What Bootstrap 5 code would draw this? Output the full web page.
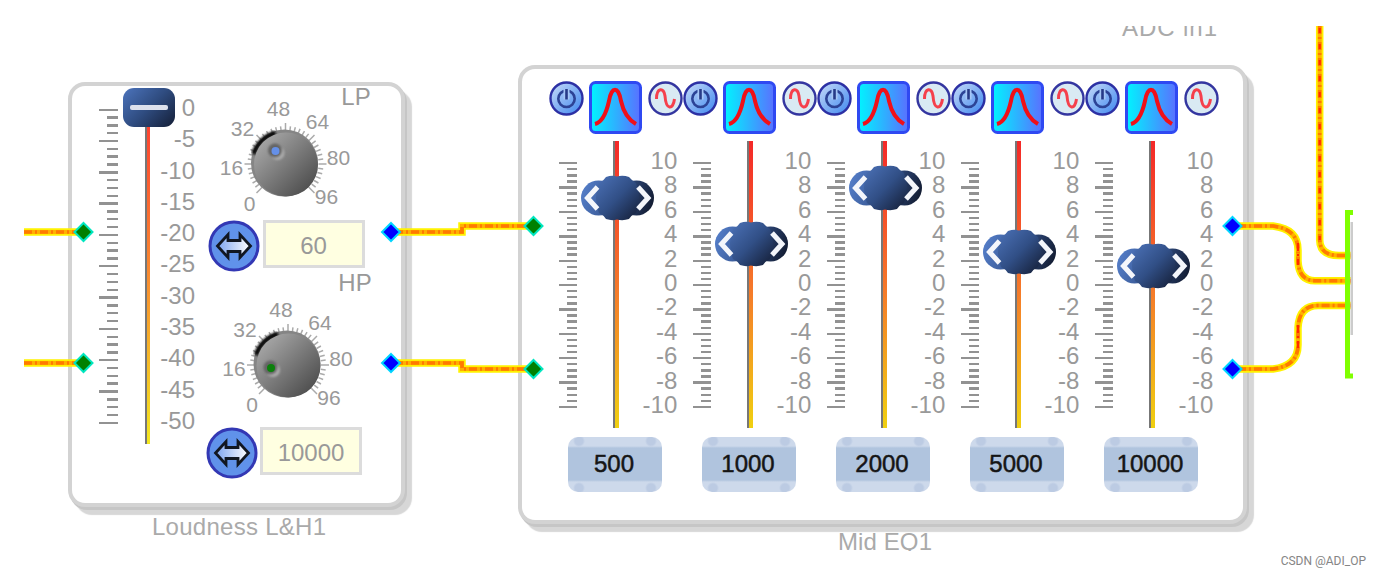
<!DOCTYPE html>
<html lang="en">
<head>
<meta charset="utf-8">
<meta name="viewport" content="width=device-width, initial-scale=1">
<title>Signal flow: Loudness and Mid EQ</title>
<link href="https://cdn.jsdelivr.net/npm/bootstrap@5.3.0/dist/css/bootstrap.min.css" rel="stylesheet">
<style>
  body { font-family: "Liberation Sans", Arial, sans-serif; background: #fff; height: 576px; overflow: hidden; }
  .schematic { width: 1329px; height: 525px; margin: 26px 0 0 24px; font-size: 24px; line-height: 24px; color: #999; }
  .wires { left: 0; top: 0; z-index: 3; pointer-events: none; }
  .block { background: #fff; border: 4px solid #d3d3d3; border-radius: 17px; box-shadow: 2px 3px 0 #c6c6c6, 7px 8px 1px #d7d7d7; }
  .block-loudness { left: 44px; top: 56px; width: 337px; height: 425px; padding: 2px 0 0 27px; }
  .block-eq { left: 494px; top: 39px; width: 729px; height: 459px; padding: 12px 0 0 26.5px; }

  .ruler { width: 18.5px; }
  .ruler i { height: 2.4px; width: 10.5px; background: #929292; filter: blur(.4px); }
  .ruler i.major { width: 18.5px; }
  .track { width: 5.5px; border-left: 2.5px solid #777; }
  .loud-ruler { height: 316px; margin-top: 20.5px; }
  .loud-slide { width: 52px; margin-left: 5px; height: 356px; }
  .loud-slide .track { margin-left: 22px; height: 356px; background: linear-gradient(#ff3030, #f98a30 52%, #f4e820); }
  .loud-thumb { left: 0; top: 0; width: 52px; height: 39px; border-radius: 11px; background: linear-gradient(135deg, #4c74bd, #2f4c80 50%, #141e36); }
  .loud-thumb span { width: 38px; height: 5px; border-radius: 2px; background: #dde1ec; }
  .loud-scale { width: 40px; height: 337px; margin: 8px 0 0 -19.5px; z-index: 1; }
  .filters { width: 166px; margin-left: 7px; }
  .filters svg { display: block; }
  .filter-two { margin-top: 4px; }
  .entry { width: 102px; height: 48px; background: #ffffe1; border: 3px solid #dcdcdc; line-height: 46px; }
  .entry-row { gap: 2.5px; }
  .filter-one .entry-row { padding-left: 6px; }
  .filter-two .entry-row { padding-left: 3.5px; }

  .channel { width: 134px; }
  .eq-ruler { height: 246.4px; margin: 21px 0 0 10.3px; }
  .eq-slide { width: 73px; margin-left: 3.5px; height: 287px; }
  .eq-slide .track { margin-left: 32.5px; height: 287px; background: linear-gradient(#f42828, #f57a2a 52%, #f0d010); }
  .eq-thumb { left: 0; }
  .eq-scale { width: 38px; height: 268px; margin: 8px 0 0 -14.5px; }
  .chip { width: 94px; height: 55px; margin: 9px 0 0 19.5px; border-radius: 10px; color: #151515; line-height: 54px;
    padding-right: 2px; -webkit-text-stroke: .5px #151515;
    background:
      radial-gradient(circle at 11px 4px, #bccbe3 0 4px, transparent 6px),
      radial-gradient(circle at 83px 4px, #bccbe3 0 4px, transparent 6px),
      radial-gradient(circle at 11px 51px, #bccbe3 0 4px, transparent 6px),
      radial-gradient(circle at 83px 51px, #bccbe3 0 4px, transparent 6px),
      linear-gradient(#cdd9eb 0 9px, #b0c4de 11px 43px, #cdd9eb 45px); }
  .credit { font: 12px/20px Roboto, sans-serif; color: #858585; padding-right: 15px; }
</style>
</head>
<body>
<svg width="0" height="0" class="position-absolute" aria-hidden="true">
  <defs>
    <linearGradient id="knobFill" x1="0" y1="0" x2="1" y2="1"><stop offset=".1" stop-color="#a8a8a8"/><stop offset=".9" stop-color="#4c4c4c"/></linearGradient>
    <linearGradient id="navy" x1="0" y1="0" x2="1" y2="1"><stop stop-color="#4c72b8"/><stop offset=".5" stop-color="#314f86"/><stop offset="1" stop-color="#131c33"/></linearGradient>
    <linearGradient id="navyWide" gradientUnits="userSpaceOnUse" x1="0" y1="10" x2="73" y2="36"><stop stop-color="#5680cc"/><stop offset=".5" stop-color="#34528b"/><stop offset="1" stop-color="#10182b"/></linearGradient>
    <linearGradient id="arrowFill"><stop stop-color="#7ea5f0"/><stop offset="1" stop-color="#fff"/></linearGradient>
    <linearGradient id="powerFill" x1="0" y1="0" x2="1" y2="1"><stop stop-color="#c9dcf8"/><stop offset="1" stop-color="#3d87f0"/></linearGradient>
    <linearGradient id="peakFill"><stop stop-color="#00f4ff"/><stop offset="1" stop-color="#5a70ff"/></linearGradient>
    <filter id="soften"><feGaussianBlur stdDeviation=".8"/></filter>
    <symbol id="swap" viewBox="0 0 52 52">
      <circle cx="26" cy="26" r="24" fill="#6092ea" stroke="#3338b4" stroke-width="3"/>
      <path d="M9.500 26 20 14.500 V20.500 H32 V14.500 L42.500 26 32 37.500 V31.500 H20 V37.500 Z" fill="url(#arrowFill)" stroke="#111722" stroke-width="2.800"/>
    </symbol>
    <symbol id="power" viewBox="0 0 35 35">
      <circle cx="17.500" cy="17.500" r="16" fill="url(#powerFill)" stroke="#2c30a4" stroke-width="2.400"/>
      <circle cx="17.500" cy="17.800" r="8.200" fill="none" stroke="#2c4396" stroke-width="2.600"/>
      <path d="M17.500 8 V18.500" stroke="#a6c6f6" stroke-width="6"/><path d="M17.500 8 V18.500" stroke="#273a88" stroke-width="2.600"/>
    </symbol>
    <symbol id="sine" viewBox="0 0 35 35">
      <circle cx="17.500" cy="17.500" r="16" fill="#d9eaf3" stroke="#3436a0" stroke-width="2.400"/>
      <path d="M8.500 18 C8.500 6.500 16 6 17 15 C18 29 25 29.500 26.500 18" fill="none" stroke="#f5404c" stroke-width="3"/>
    </symbol>
    <symbol id="peak" viewBox="0 0 53 53">
      <rect x="1.500" y="1.500" width="50" height="50" rx="5" fill="url(#peakFill)" stroke="#2f49f2" stroke-width="3"/>
      <path d="M6 43 C14 41 18 29 20 20 C22.500 5 29.500 5 32 20 C34 29 38 38 47 43" fill="none" stroke="#f01018" stroke-width="4"/>
    </symbol>
    <symbol id="thumb" viewBox="0 0 73 46">
      <g fill="url(#navyWide)"><circle cx="17.500" cy="23" r="17.500"/><circle cx="55.500" cy="23" r="17.500"/></g>
      <path d="M25 2 Q31 0 36 1.500 Q42 0 48 2 Q51 5.500 55 8 Q61 23 55 38 Q50 40.500 48 44 Q42 46 36 44.500 Q31 46 25 44 Q23 40.500 18 38 Q12 23 18 8 Q23 5.500 25 2Z" fill="url(#navy)"/>
      <path d="M16.500 12 L6.500 23 16.500 34 M57 12 L67 23 57 34" fill="none" stroke="#f4f6fb" stroke-width="5"/>
    </symbol>
  </defs>
</svg>

<main class="schematic position-relative overflow-hidden">
  <section class="block block-loudness position-absolute d-flex align-items-start">
    <div class="ruler loud-ruler d-flex flex-column justify-content-between align-items-end" data-ruler></div>
    <div class="loud-slide position-relative">
      <div class="track"></div>
      <div class="loud-thumb position-absolute d-flex align-items-center justify-content-center"><span></span></div>
    </div>
    <div class="loud-scale d-flex flex-column justify-content-between text-end" data-scale="0,-5,-10,-15,-20,-25,-30,-35,-40,-45,-50"></div>
    <div class="filters">
      <div class="filter-one">
        <svg class="overflow-visible" data-knob="LP" data-shift="16.500 0" data-dot="57 63" data-color="#6590e8" width="166" height="132"></svg>
        <div class="entry-row d-flex"><svg width="52" height="52"><use href="#swap"/></svg><div class="entry text-center">60</div></div>
      </div>
      <div class="filter-two">
        <svg class="overflow-visible" data-knob="HP" data-shift="19 13" data-dot="50 79" data-color="#0b800b" width="166" height="151"></svg>
        <div class="entry-row d-flex"><svg width="52" height="52"><use href="#swap"/></svg><div class="entry text-center">10000</div></div>
      </div>
    </div>
  </section>
  <section class="block block-eq position-absolute d-flex align-items-start" id="eq"></section>

  <svg class="wires position-absolute" width="1329" height="525" viewBox="24 26 1329 525">
    <defs>
      <g id="runs" fill="none">
        <path d="M24 232H80"/><path d="M24 363H80"/>
        <path d="M395 232H462V226H530"/><path d="M395 363H462V369H530"/>
        <path d="M1238 226H1273Q1298 229 1298 250V261Q1299 280.700 1315 280.700H1353"/>
        <path d="M1238 369H1273Q1298 366 1298 345V328Q1299 305.500 1318 305.500H1353"/>
        <path d="M1319.700 26V240Q1320 255.500 1339 255.500H1353"/>
      </g>
      <path id="pin" d="M0 -9 9 0 0 9 -9 0Z" stroke-width="2"/>
    </defs>
    <use href="#runs" stroke="#fff200" stroke-width="7.500"/>
    <use href="#runs" stroke="#ffb000" stroke-width="4"/>
    <use href="#runs" stroke="#ff7a00" stroke-width="3.600" stroke-dasharray="8 3 2 3"/>
    <g fill="none" stroke="#ff2b00" stroke-width="2.200"><path d="M1319.700 28V240" stroke-dasharray="5 11"/><path d="M1298 243V265M1298 325V348" stroke-dasharray="8 3 2 3"/></g>
    <path d="M1352 222V335" stroke="#ccc" stroke-width="3"/>
    <path d="M1356 212.500H1347.500V376H1356" fill="none" stroke="#80ff00" stroke-width="5"/>
    <g fill="#008000" stroke="#00e6c0"><use href="#pin" x="83.500" y="232"/><use href="#pin" x="83.500" y="363"/><use href="#pin" x="533.500" y="226"/><use href="#pin" x="533.500" y="369"/></g>
    <g fill="#0000ff" stroke="#00d5ff"><use href="#pin" x="391" y="232"/><use href="#pin" x="391" y="363"/><use href="#pin" x="1232.500" y="226"/><use href="#pin" x="1232.500" y="369"/></g>
    <g font-size="24" fill="#aaa">
      <text x="152" y="535" textLength="174">Loudness L&amp;H1</text>
      <text x="838" y="550" textLength="94">Mid EQ1</text>
      <text x="1122" y="36" textLength="95">ADC in1</text>
    </g>
  </svg>
</main>
<footer class="credit text-end">CSDN @ADI_OP</footer>

<script src="https://cdn.jsdelivr.net/npm/bootstrap@5.3.0/dist/js/bootstrap.bundle.min.js"></script>
<script>
  const ticks = Array.from({ length: 41 }, (_, i) => `<i class="${i % 4 ? '' : 'major'}"></i>`).join('');
  const channels = [[500, 198], [1000, 244], [2000, 188], [5000, 252], [10000, 265.5]];
  document.getElementById('eq').innerHTML = channels.map(([freq, y]) => `
    <div class="channel flex-shrink-0">
      <div class="d-flex justify-content-between">
        <svg width="35" height="35"><use href="#power"/></svg>
        <svg width="53" height="53"><use href="#peak"/></svg>
        <svg width="35" height="35"><use href="#sine"/></svg>
      </div>
      <div class="d-flex align-items-start" style="margin-top:7px">
        <div class="ruler eq-ruler d-flex flex-column justify-content-between align-items-end" data-ruler></div>
        <div class="eq-slide position-relative flex-shrink-0"><div class="track"></div>
          <svg class="eq-thumb position-absolute" width="73" height="46" style="top:${y - 164}px"><use href="#thumb"/></svg></div>
        <div class="eq-scale d-flex flex-column justify-content-between text-end" data-scale="10,8,6,4,2,0,-2,-4,-6,-8,-10"></div>
      </div>
      <div class="chip text-center">${freq}</div>
    </div>`).join('');
  document.querySelectorAll('[data-ruler]').forEach(el => el.innerHTML = ticks);
  document.querySelectorAll('[data-scale]').forEach(el =>
    el.innerHTML = el.dataset.scale.split(',').map(v => `<span>${v}</span>`).join(''));

  // Both dials share one geometry; each shifts it inside its own area
  const labels = [['0', 31, 115], ['16', 13, 79], ['32', 24, 40], ['48', 60, 20], ['64', 99, 33], ['80', 120, 69], ['96', 108, 108]];
  document.querySelectorAll('[data-knob]').forEach(el => {
    const hp = el.dataset.knob === 'HP', cx = 67, cy = 76;
    let lines = '';
    for (let a = 135; a <= 405; a += 7.5) {
      const r = a * Math.PI / 180, c = Math.cos(r), s = Math.sin(r), len = Math.round((a - 135) / 7.5) % 6 ? 38 : 41;
      lines += `<path d="M${cx + c * 33} ${cy + s * 33}L${cx + c * len} ${cy + s * len}"/>`;
    }
    const [px, py] = el.dataset.dot.split(' ').map(Number);
    el.innerHTML = `<g transform="translate(${el.dataset.shift})"><g stroke="#aaa" stroke-width="1.500">${lines}</g>
      <circle cx="${cx - 1}" cy="${cy - 1}" r="33.500" fill="#858585"/>
      <path d="M${cx - 32} ${cy - 10}A32.500 32.500 0 0 1 ${cx - 10} ${cy - 31}" fill="none" stroke="#111" stroke-width="5" filter="url(#soften)"/>
      <circle cx="${cx + .5}" cy="${cy + .5}" r="32" fill="url(#knobFill)"/>
      <g filter="url(#soften)"><circle cx="${px + 2}" cy="${py + 2}" r="7" fill="#aaa"/><circle cx="${px - .5}" cy="${py - .5}" r="7" fill="#656565"/></g>
      <circle cx="${px}" cy="${py}" r="4" fill="${el.dataset.color}"/>
      <g font-size="21" fill="#999" text-anchor="middle">${labels.map(([t, x, y]) => `<text x="${x}" y="${y + 7.5}">${t}</text>`).join('')}</g></g>
      <text x="${hp ? 153 : 154}" y="${hp ? 14.5 : 17}" font-size="24" fill="#999" text-anchor="middle">${el.dataset.knob}</text>`;
  });
</script>
</body>
</html>
